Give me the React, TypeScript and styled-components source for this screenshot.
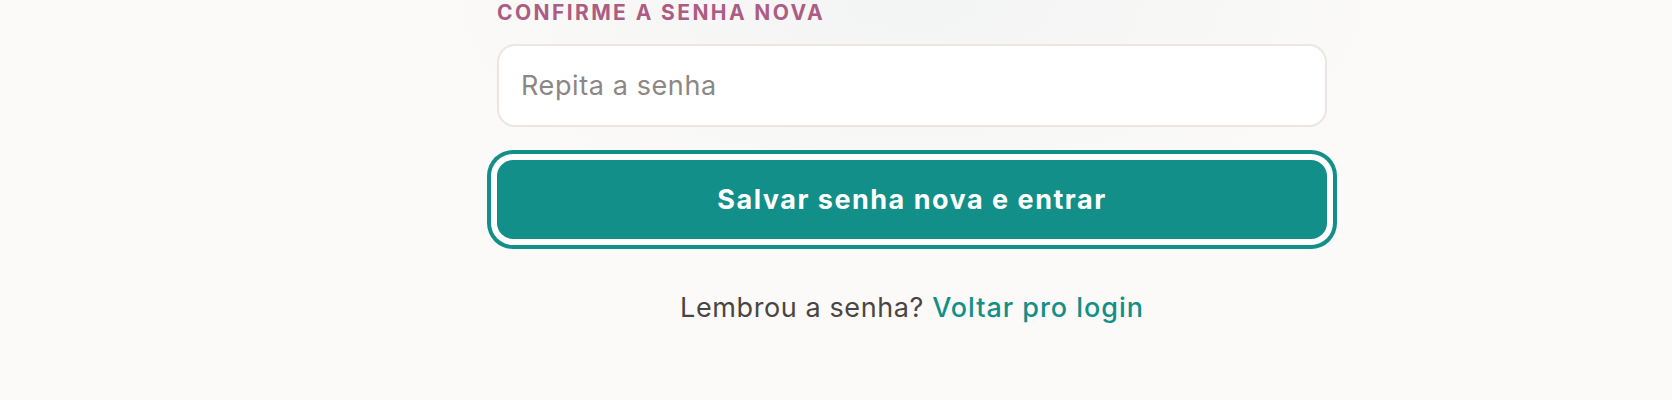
import React from "react";
import styled, { createGlobalStyle } from "styled-components";

const GlobalStyle = createGlobalStyle`
  html, body {
    margin: 0;
    padding: 0;
    background: #fbfaf8;
  }
  body {
    font-family: Inter, "Noto Sans", "Liberation Sans", sans-serif;
    -webkit-font-smoothing: antialiased;
  }
  * { box-sizing: border-box; }
`;

const Page = styled.main`
  min-height: 400px;
  display: flex;
  justify-content: center;
  padding-left: 152px;
  background:
    radial-gradient(ellipse 520px 230px at 912px 0px, rgba(243, 244, 244, 1) 0%, rgba(245, 246, 245, 0.8) 45%, rgba(251, 250, 248, 0) 100%),
    #fbfaf8;
`;

const Form = styled.form`
  width: 830px;
  display: flex;
  flex-direction: column;
`;

const Label = styled.label`
  display: block;
  font-size: 21px;
  line-height: 25px;
  font-weight: 700;
  letter-spacing: 2.4px;
  text-transform: uppercase;
  color: #ad5c83;
  margin-bottom: 19px;
`;

const Input = styled.input`
  height: 83px;
  width: 100%;
  border: 2px solid #ebe6e2;
  border-radius: 18px;
  background: #ffffff;
  padding: 0 22px;
  font-family: inherit;
  font-size: 27px;
  letter-spacing: 0.6px;
  color: #3f3a36;
  outline: none;
  &::placeholder {
    color: #8c8783;
  }
`;

const SubmitButton = styled.button`
  margin-top: 33px;
  height: 79px;
  width: 100%;
  border: none;
  border-radius: 16px;
  background: #128f88;
  color: #ffffff;
  font-family: inherit;
  font-size: 27px;
  font-weight: 700;
  letter-spacing: 1.5px;
  cursor: pointer;
  box-shadow: 0 0 0 6px #ffffff, 0 0 0 10px #128f88;
`;

const Footer = styled.p`
  margin: 49px 0 0;
  text-align: center;
  font-size: 27px;
  line-height: 40px;
  letter-spacing: 0.6px;
  color: #4a4541;
`;

const Link = styled.a`
  color: #128f88;
  font-weight: 500;
  letter-spacing: 0.95px;
  text-decoration: none;
`;

export default function App() {
  return (
    <>
      <GlobalStyle />
      <Page>
        <Form onSubmit={(e) => e.preventDefault()}>
          <Label htmlFor="confirm">Confirme a senha nova</Label>
          <Input id="confirm" type="password" placeholder="Repita a senha" />
          <SubmitButton type="submit">Salvar senha nova e entrar</SubmitButton>
          <Footer>
            Lembrou a senha? <Link href="#">Voltar pro login</Link>
          </Footer>
        </Form>
      </Page>
    </>
  );
}
